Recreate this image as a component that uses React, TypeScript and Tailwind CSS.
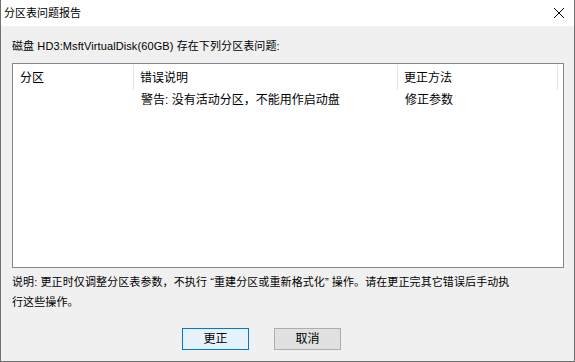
import React from "react";

export default function App() {
  const font = { fontFamily: '"Liberation Sans", "Noto Sans CJK SC", sans-serif' };
  return (
    <div
      className="w-[575px] h-[362px] flex flex-col bg-[#f0f0f0] border-x border-b border-[#707070] text-black text-[12px] leading-[16px] overflow-hidden"
      style={font}
    >
      <div className="h-[26px] shrink-0 bg-white flex items-center justify-between pl-[3px] pr-[8px]">
        <span className="text-[11px]">分区表问题报告</span>
        <svg width="12" height="12" viewBox="0 0 12 12" className="mr-[1px]">
          <path d="M1 1 L11 11 M11 1 L1 11" stroke="#000" strokeWidth="1" fill="none" />
        </svg>
      </div>
      <div className="flex-1 flex flex-col pl-[11px] pr-[10px]">
        <div className="h-[37px] shrink-0 pt-[12px] text-[11px] tracking-[0.1px]">磁盘 HD3:MsftVirtualDisk(60GB) 存在下列分区表问题:</div>
        <div className="h-[205px] shrink-0 border border-[#828790] bg-white flex flex-col">
          <div className="flex h-[26px] pt-[1px]">
            <div className="w-[121px] flex items-center pl-[7px] border-r border-[#e5e5e5]">分区</div>
            <div className="w-[264px] flex items-center pl-[6px] border-r border-[#e5e5e5]">错误说明</div>
            <div className="w-[160px] flex items-center pl-[6px] border-r border-[#e5e5e5]">更正方法</div>
          </div>
          <div className="flex h-[20px]">
            <div className="w-[121px]" />
            <div className="w-[264px] flex items-center pl-[7px]">警告: 没有活动分区，不能用作启动盘</div>
            <div className="w-[160px] flex items-center pl-[7px]">修正参数</div>
          </div>
        </div>
        <div className="mt-[4px] leading-[20px] text-[11px] tracking-[0.1px] whitespace-nowrap">
          说明: 更正时仅调整分区表参数，不执行 “重建分区或重新格式化” 操作。请在更正完其它错误后手动执
          <br />
          行这些操作。
        </div>
        <div className="flex mt-[16px] ml-[170px] gap-[25px]">
          <button className="w-[67px] h-[22px] border border-[#0078d7] bg-[#e5f1fb] flex items-center justify-center text-[12px]">
            更正
          </button>
          <button className="w-[67px] h-[22px] border border-[#adadad] bg-[#e1e1e1] flex items-center justify-center text-[12px]">
            取消
          </button>
        </div>
      </div>
    </div>
  );
}
